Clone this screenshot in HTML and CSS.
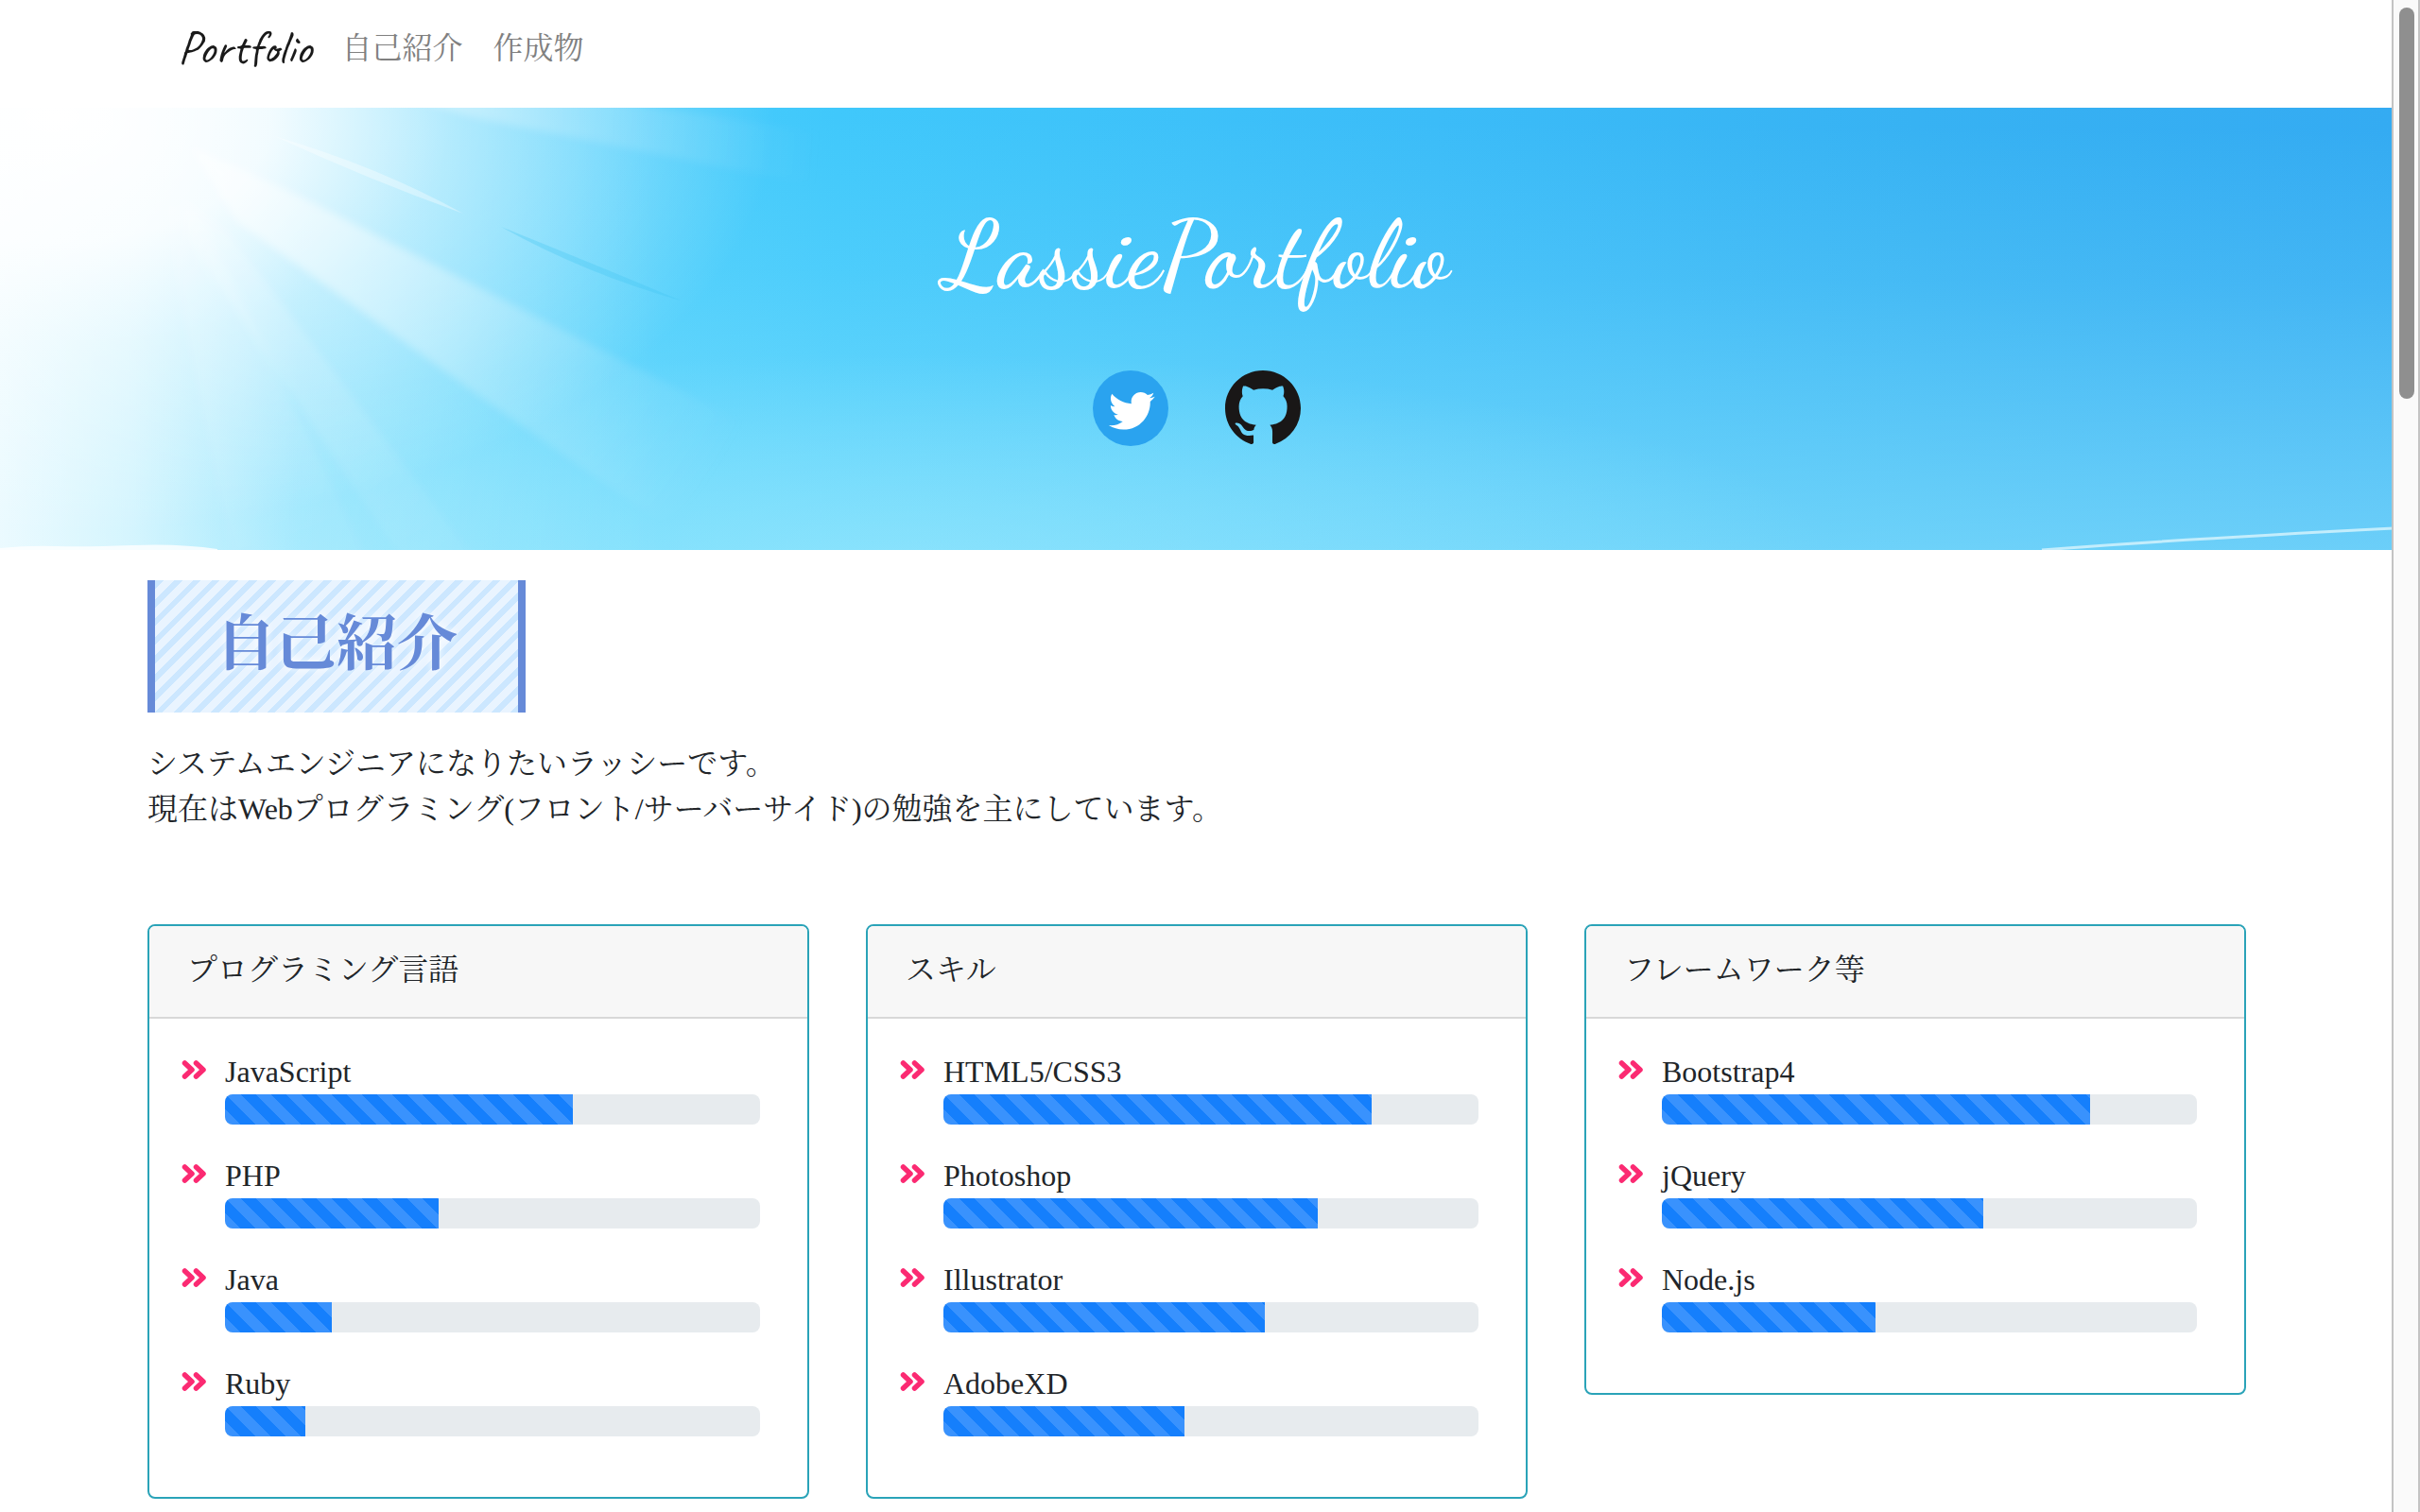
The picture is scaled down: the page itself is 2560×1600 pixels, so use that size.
FILE: index.html
```html
<!DOCTYPE html>
<html lang="ja">
<head>
<meta charset="utf-8">
<meta name="viewport" content="width=device-width, initial-scale=1">
<title>LassiePortfolio</title>
<link rel="stylesheet" href="styles.css">
</head>
<body>
<svg class="symbols" aria-hidden="true">
  <symbol id="chevrons" viewBox="0 0 26 24">
    <path d="M3.500 3l7.500 7-7.500 7M15.500 3l7.500 7-7.500 7" fill="none" stroke="#fb2a72" stroke-width="5.500" stroke-linecap="round" stroke-linejoin="round"/>
  </symbol>
</svg>

<nav class="navbar">
  <div class="container navbar-inner">
    <a class="brand" href="#top">Portfolio</a>
    <a class="nav-link" href="#about">自己紹介</a>
    <a class="nav-link" href="#works">作成物</a>
  </div>
</nav>

<header class="hero" id="top">
  <svg class="sky" viewBox="0 0 2532 468" preserveAspectRatio="none" aria-hidden="true">
    <defs>
      <linearGradient id="base" x1="0" y1="0" x2="1" y2="0">
        <stop offset="0" stop-color="#6ddcfd"/>
        <stop offset=".2" stop-color="#50d0fc"/>
        <stop offset=".35" stop-color="#40c8fb"/>
        <stop offset=".6" stop-color="#3bbcf8"/>
        <stop offset=".8" stop-color="#37b2f3"/>
        <stop offset="1" stop-color="#34abf2"/>
      </linearGradient>
      <linearGradient id="haze" x1="0" y1="0" x2="-.05" y2="1">
        <stop offset="0" stop-color="#90e6fd" stop-opacity="0"/>
        <stop offset=".35" stop-color="#90e6fd" stop-opacity=".16"/>
        <stop offset=".7" stop-color="#90e6fd" stop-opacity=".42"/>
        <stop offset="1" stop-color="#90e6fd" stop-opacity=".64"/>
      </linearGradient>
      <radialGradient id="low" gradientUnits="userSpaceOnUse" cx="0" cy="0" r="1" gradientTransform="translate(950 480) scale(1000 220)">
        <stop offset="0" stop-color="#a0eafd" stop-opacity=".5"/>
        <stop offset="1" stop-color="#a0eafd" stop-opacity="0"/>
      </radialGradient>
      <linearGradient id="glow" gradientUnits="userSpaceOnUse" x1="0" y1="0" x2="700" y2="0">
        <stop offset="0" stop-color="#fff" stop-opacity=".84"/>
        <stop offset=".2" stop-color="#fff" stop-opacity=".66"/>
        <stop offset=".45" stop-color="#fff" stop-opacity=".26"/>
        <stop offset="1" stop-color="#fff" stop-opacity="0"/>
      </linearGradient>
      <radialGradient id="sun" gradientUnits="userSpaceOnUse" cx="0" cy="0" r="1" gradientTransform="translate(60 10) scale(760 440)">
        <stop offset="0" stop-color="#fff"/>
        <stop offset=".3" stop-color="#fff" stop-opacity=".88"/>
        <stop offset=".55" stop-color="#fff" stop-opacity=".48"/>
        <stop offset="1" stop-color="#fff" stop-opacity="0"/>
      </radialGradient>
      <radialGradient id="ray" gradientUnits="userSpaceOnUse" cx="150" cy="0" r="720">
        <stop offset="0" stop-color="#fff" stop-opacity=".6"/>
        <stop offset=".35" stop-color="#fff" stop-opacity=".5"/>
        <stop offset=".65" stop-color="#fff" stop-opacity=".22"/>
        <stop offset="1" stop-color="#fff" stop-opacity="0"/>
      </radialGradient>
      <filter id="soft"><feGaussianBlur stdDeviation="4"/></filter>
    </defs>
    <rect width="2532" height="468" fill="url(#base)"/>
    <rect width="2532" height="468" fill="url(#haze)"/>
    <rect width="2532" height="468" fill="url(#low)"/>
    <rect width="700" height="468" fill="url(#glow)"/>
    <rect width="820" height="468" fill="url(#sun)"/>
    <g fill="url(#ray)" filter="url(#soft)">
      <path d="M400 -20H560L1000 45 900 90 500 10Z" opacity=".7"/>
      <path d="M200 40L310 90 820 350 700 440 500 300 250 120Z" opacity=".9"/>
      <path d="M190 90L240 130 520 500 440 500 200 140Z" opacity=".35"/>
      <path d="M170 90L215 120 400 500 250 500 190 200Z" opacity=".25"/>
    </g>
    <path d="M290 30Q400 62 490 112 390 76 290 30Z" fill="#fff" opacity=".35"/>
    <path d="M530 126Q630 166 720 204 620 176 530 126Z" fill="#3fc5f3" opacity=".3"/>
    <path d="M0 466q30-3 60-2t80-1 90 4v2H0Z" fill="#fff" opacity=".8"/>
    <path d="M2160 468Q2300 457 2532 445" fill="none" stroke="#c3edfc" stroke-width="3"/>
  </svg>
  <h1 class="hero-title">LassiePortfolio</h1>
  <div class="social">
    <a href="#twitter" aria-label="Twitter">
      <svg class="social-icon" viewBox="0 0 80 80">
        <circle cx="40" cy="40" r="40" fill="#2aa3ef"/>
        <path transform="translate(17 18.400) scale(2.030)" fill="#fff" d="M23.954 4.569c-.885.389-1.830.654-2.825.775 1.014-.611 1.794-1.574 2.163-2.723-.951.555-2.005.959-3.127 1.184-.896-.959-2.173-1.559-3.591-1.559-2.717 0-4.920 2.203-4.920 4.917 0 .39.045.765.127 1.124C7.691 8.094 4.066 6.130 1.640 3.161c-.427.722-.666 1.561-.666 2.475 0 1.710.87 3.213 2.188 4.096-.807-.026-1.566-.248-2.228-.616v.061c0 2.385 1.693 4.374 3.946 4.827-.413.111-.849.171-1.296.171-.314 0-.615-.03-.916-.086.631 1.953 2.445 3.377 4.604 3.417-1.680 1.319-3.809 2.105-6.102 2.105-.39 0-.779-.023-1.170-.067 2.189 1.394 4.768 2.209 7.557 2.209 9.054 0 13.999-7.496 13.999-13.986 0-.209 0-.42-.015-.63.961-.689 1.800-1.560 2.460-2.548l-.047-.02z"/>
      </svg>
    </a>
    <a href="#github" aria-label="GitHub">
      <svg class="social-icon" viewBox="0 0 16 16">
        <path fill="#191717" d="M8 0C3.580 0 0 3.580 0 8c0 3.540 2.290 6.530 5.470 7.590.4.07.55-.17.55-.38 0-.19-.01-.82-.01-1.490-2.010.37-2.530-.49-2.690-.94-.09-.23-.48-.94-.82-1.130-.28-.15-.68-.52-.01-.53.63-.01 1.080.58 1.230.82.72 1.210 1.870.87 2.330.66.07-.52.28-.87.51-1.070-1.780-.2-3.640-.89-3.640-3.950 0-.87.31-1.590.82-2.150-.08-.2-.36-1.020.08-2.120 0 0 .67-.21 2.200.82.64-.18 1.320-.27 2-.27s1.360.09 2 .27c1.530-1.040 2.200-.82 2.200-.82.44 1.100.16 1.920.08 2.120.51.56.82 1.270.82 2.150 0 3.070-1.870 3.750-3.650 3.950.29.25.54.73.54 1.480 0 1.070-.01 1.930-.01 2.200 0 .21.15.46.55.38A8.010 8.010 0 0 0 16 8c0-4.420-3.580-8-8-8z"/>
      </svg>
    </a>
  </div>
</header>

<main class="container" id="about">
  <h2 class="section-title">自己紹介</h2>
  <p class="intro">システムエンジニアになりたいラッシーです。<br>現在はWebプログラミング(フロント/サーバーサイド)の勉強を主にしています。</p>

  <div class="cards">
    <section class="card">
      <h3 class="card-header">プログラミング言語</h3>
      <ul class="skills">
        <li class="skill"><svg class="chevrons"><use href="#chevrons"/></svg><span>JavaScript</span><div class="progress"><div class="bar" style="width: 65%"></div></div></li>
        <li class="skill"><svg class="chevrons"><use href="#chevrons"/></svg><span>PHP</span><div class="progress"><div class="bar" style="width: 40%"></div></div></li>
        <li class="skill"><svg class="chevrons"><use href="#chevrons"/></svg><span>Java</span><div class="progress"><div class="bar" style="width: 20%"></div></div></li>
        <li class="skill"><svg class="chevrons"><use href="#chevrons"/></svg><span>Ruby</span><div class="progress"><div class="bar" style="width: 15%"></div></div></li>
      </ul>
    </section>
    <section class="card">
      <h3 class="card-header">スキル</h3>
      <ul class="skills">
        <li class="skill"><svg class="chevrons"><use href="#chevrons"/></svg><span>HTML5/CSS3</span><div class="progress"><div class="bar" style="width: 80%"></div></div></li>
        <li class="skill"><svg class="chevrons"><use href="#chevrons"/></svg><span>Photoshop</span><div class="progress"><div class="bar" style="width: 70%"></div></div></li>
        <li class="skill"><svg class="chevrons"><use href="#chevrons"/></svg><span>Illustrator</span><div class="progress"><div class="bar" style="width: 60%"></div></div></li>
        <li class="skill"><svg class="chevrons"><use href="#chevrons"/></svg><span>AdobeXD</span><div class="progress"><div class="bar" style="width: 45%"></div></div></li>
      </ul>
    </section>
    <section class="card">
      <h3 class="card-header">フレームワーク等</h3>
      <ul class="skills">
        <li class="skill"><svg class="chevrons"><use href="#chevrons"/></svg><span>Bootstrap4</span><div class="progress"><div class="bar" style="width: 80%"></div></div></li>
        <li class="skill"><svg class="chevrons"><use href="#chevrons"/></svg><span>jQuery</span><div class="progress"><div class="bar" style="width: 60%"></div></div></li>
        <li class="skill"><svg class="chevrons"><use href="#chevrons"/></svg><span>Node.js</span><div class="progress"><div class="bar" style="width: 40%"></div></div></li>
      </ul>
    </section>
  </div>
</main>

<div class="scrollbar" aria-hidden="true"><div class="scrollbar-thumb"></div></div>
</body>
</html>
```

FILE: styles.css
```css
* {
  box-sizing: border-box;
}

body {
  margin: 0;
  padding-right: 28px;
  background: #fff;
  color: #212529;
  font-family: "Liberation Serif", "Noto Serif CJK JP", "Noto Sans CJK JP", serif;
  font-size: 32px;
  line-height: 48px;
}

a {
  color: inherit;
  text-decoration: none;
}

.symbols {
  display: none;
}

.container {
  max-width: 2280px;
  margin: 0 auto;
  padding: 0 30px;
}

/* Navigation */
.navbar {
  padding: 18px 0 30px;
}

.navbar-inner {
  display: flex;
  align-items: center;
  gap: 32px;
  height: 66px;
  padding: 0 62px;
}

.brand {
  color: #1a1a1a;
  font-family: "Caveat", "Liberation Sans Narrow", "Liberation Sans", sans-serif;
  font-size: 50px;
  font-weight: 500;
}

.nav-link {
  color: #808080;
}

/* Hero */
.hero {
  position: relative;
  display: flex;
  flex-direction: column;
  align-items: center;
  gap: 56px;
  padding: 90px 0 110px;
  overflow: hidden;
}

.sky {
  position: absolute;
  inset: 0;
  width: 100%;
  height: 100%;
}

.hero-title {
  position: relative;
  margin: 0;
  color: #fff;
  font-family: "Dancing Script", "Liberation Serif", serif;
  font-size: 100px;
  font-weight: 500;
  line-height: 132px;
}

.social {
  position: relative;
  display: flex;
  gap: 60px;
}

.social-icon {
  display: block;
  width: 80px;
  height: 80px;
}

/* Introduction */
.section-title {
  width: fit-content;
  margin: 32px 0 30px;
  padding: 28px 64px 32px;
  border: solid #668ad8;
  border-width: 0 8px;
  background: repeating-linear-gradient(-45deg, #cce7ff, #cce7ff 6px, #e9f4ff 6px, #e9f4ff 14px);
  color: #668ad8;
  font-size: 64px;
  line-height: 80px;
  text-shadow: 0 0 10px #fff;
}

.intro {
  margin: 0 0 98px;
}

/* Skill cards */
.cards {
  display: grid;
  grid-template-columns: repeat(3, 1fr);
  align-items: start;
  gap: 60px;
}

.card {
  border: 2px solid #2aa3b8;
  border-radius: 8px;
  overflow: hidden;
}

.card-header {
  margin: 0;
  padding: 22px 40px 26px;
  border-bottom: 2px solid #d8d8d8;
  background: #f7f7f7;
  font-size: 32px;
  font-weight: 400;
}

.skills {
  display: grid;
  gap: 30px;
  margin: 0;
  padding: 32px 50px 64px 34px;
  list-style: none;
}

.skill {
  display: grid;
  grid-template-columns: 26px 1fr;
  column-gap: 20px;
  align-items: center;
}

.chevrons {
  width: 26px;
  height: 24px;
}

.progress {
  grid-column: 2;
  height: 32px;
  border-radius: 8px;
  background: #e7ebee;
  overflow: hidden;
}

.bar {
  height: 100%;
  background: linear-gradient(45deg, #3992fd 25%, #157ffc 25%, #157ffc 50%, #3992fd 50%, #3992fd 75%, #157ffc 75%) 0 0 / 32px 32px;
}

/* Page scrollbar */
.scrollbar {
  position: fixed;
  top: 0;
  right: 0;
  bottom: 0;
  width: 30px;
  padding: 8px 4px 0 6px;
  border: solid #c3c3c3;
  border-width: 0 2px;
  background: #fafafa;
}

.scrollbar-thumb {
  width: 16px;
  height: 26%;
  border-radius: 8px;
  background: #8f8f8f;
}
```
